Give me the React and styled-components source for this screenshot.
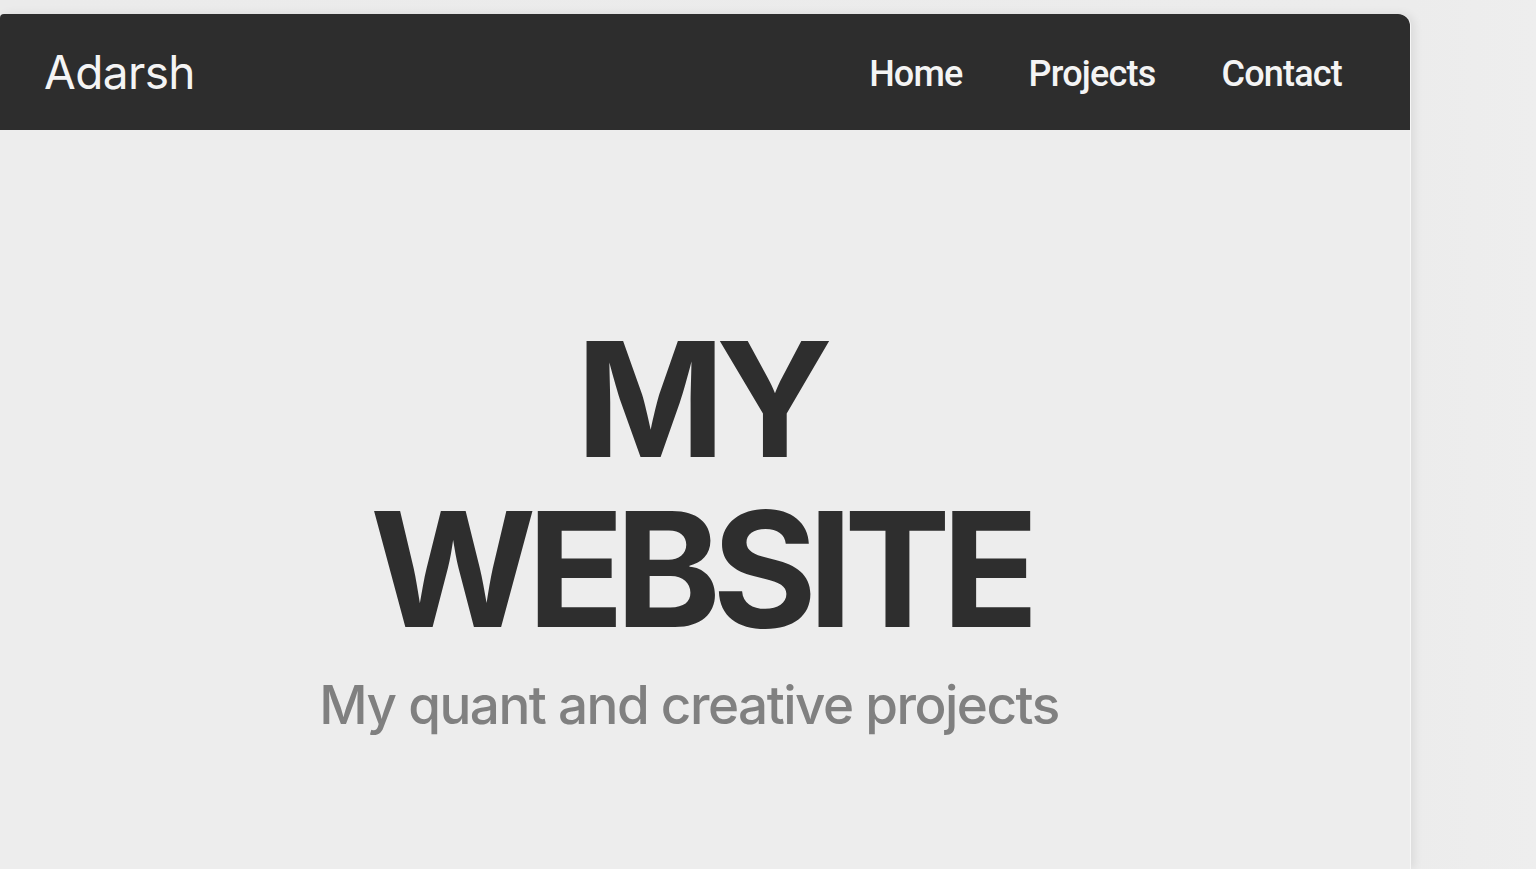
import React from "react";
import styled, { createGlobalStyle } from "styled-components";

const Global = createGlobalStyle`
  html, body { margin: 0; padding: 0; background: #ececec; }
  body { font-family: Inter, "Noto Sans", sans-serif; overflow: hidden; }
`;

const Page = styled.div`
  min-height: 869px;
  padding-top: 14px;
  box-sizing: border-box;
  background: linear-gradient(90deg, #ebebeb 0%, #ececec 92%, #eeeeee 100%);
`;

const Card = styled.div`
  width: 1410px;
  height: 855px;
  background: #ededed;
  border-radius: 4px 12px 0 0;
  box-shadow: 1px 0 0 #f7f7f7, 4px 0 10px rgba(0, 0, 0, 0.08);
  display: flex;
  flex-direction: column;
  overflow: hidden;
`;

const Header = styled.header`
  height: 116px;
  flex: none;
  background: #2d2d2d;
  display: flex;
  align-items: center;
  justify-content: space-between;
  padding: 0 68px 0 44px;
  box-sizing: border-box;
`;

const Brand = styled.div`
  color: #f4f4f4;
  font-size: 46px;
  font-weight: 400;
  letter-spacing: -0.6px;
`;

const Nav = styled.nav`
  display: flex;
  gap: 66px;
  padding-top: 4px;
`;

const NavLink = styled.a`
  color: #f4f4f4;
  font-family: Roboto, "Noto Sans", sans-serif;
  font-size: 36px;
  font-weight: 500;
  letter-spacing: -0.8px;
  text-decoration: none;
`;

const Hero = styled.main`
  flex: 1;
  display: flex;
  flex-direction: column;
  align-items: center;
  padding-top: 184px;
`;

const Title = styled.h1`
  margin: 0;
  color: #2e2e2e;
  font-size: 160px;
  font-weight: 700;
  line-height: 170px;
  letter-spacing: -9px;
  text-align: center;
  padding-right: 10px;
`;

const Subtitle = styled.p`
  margin: 19px 32px 0 0;
  color: #808080;
  font-size: 53px;
  font-weight: 500;
  letter-spacing: -1.5px;
`;

export default function App() {
  return (
    <>
      <Global />
      <Page>
        <Card>
          <Header>
            <Brand>Adarsh</Brand>
            <Nav>
              <NavLink href="#">Home</NavLink>
              <NavLink href="#">Projects</NavLink>
              <NavLink href="#">Contact</NavLink>
            </Nav>
          </Header>
          <Hero>
            <Title>
              MY
              <br />
              WEBSITE
            </Title>
            <Subtitle>My quant and creative projects</Subtitle>
          </Hero>
        </Card>
      </Page>
    </>
  );
}
